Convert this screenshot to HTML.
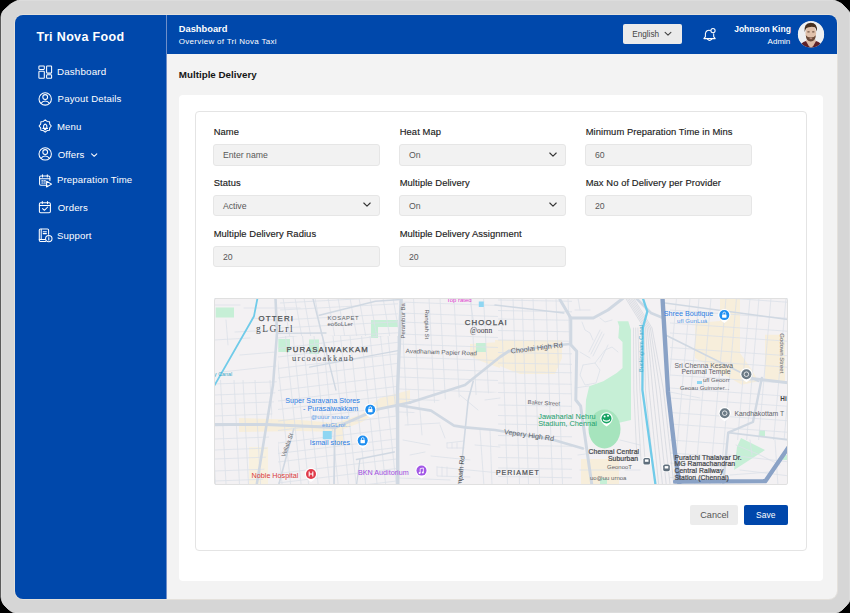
<!DOCTYPE html>
<html><head><meta charset="utf-8">
<style>
*{box-sizing:border-box;margin:0;padding:0}
html,body{width:850px;height:613px;overflow:hidden;background:#000;font-family:"Liberation Sans",sans-serif}
.abs{position:absolute}
.t{position:absolute;white-space:nowrap;line-height:1}
#frame{position:absolute;left:0;top:0;width:850px;height:613px}
#side{position:absolute;left:15px;top:15px;width:151px;height:584px;background:#0048ab;border-radius:8px 0 0 8px}
#head{position:absolute;left:166px;top:15px;width:671px;height:39px;background:#0048ab;border-radius:0 8px 0 0}
#content{position:absolute;left:166px;top:54px;width:671px;height:545px;background:#f3f3f3;border-radius:0 0 8px 0}
#sideline{position:absolute;left:166px;top:15px;width:1px;height:584px;background:#6f8fc9}
#card{position:absolute;left:179px;top:95px;width:644px;height:486px;background:#fff;border-radius:4px}
#box{position:absolute;left:194.5px;top:111px;width:612px;height:439.5px;border:1px solid #e4e4e4;border-radius:4px}
.lbl{position:absolute;white-space:nowrap;line-height:1;font-size:9.4px;color:#1b1b1b;font-weight:400;-webkit-text-stroke:0.15px #1b1b1b;letter-spacing:0.08px}
.inp{position:absolute;width:166.5px;height:21.5px;background:#f2f2f2;border:1px solid #e6e6e6;border-radius:3px}
.inp span{position:absolute;left:8.6px;top:6.3px;font-size:8.7px;line-height:1;color:#585858;white-space:nowrap}
.chev{position:absolute;right:8px;top:6.6px}
.nav{position:absolute;white-space:nowrap;line-height:1;font-size:9.6px;color:#fff;letter-spacing:0.15px}
.ico{position:absolute}
</style></head>
<body>
<div id="frame">
  <svg class="abs" style="left:0;top:0" width="850" height="613" viewBox="0 0 850 613"><path d="M19.2 0 H833 C836 0.6 839 2 842 4 L846 8 C848 10 849.5 12 850 13 V600 C849.5 602 848 604 846 606 L842 610 C840 611.5 838 612.6 836.5 613 H15 C13 612.6 10.5 611.2 8 609 L4 605 C2.4 603 1.3 600 1 597 V17 C1.3 14 2.4 11.5 4 10 L10 4.5 C13 2.5 16 0.8 19.2 0 Z" fill="#d6d6d6" stroke="#e6e6e6" stroke-width="0.8"/></svg>
  <div class="abs" style="left:14.3px;top:14.3px;width:823.4px;height:585.4px;border:0.7px solid #e4e1dc;border-radius:9px"></div>
  <div id="side"></div>
  <div id="head"></div>
  <div id="content"></div>
  <div id="sideline"></div>

  <!-- sidebar -->
  <div class="t" style="left:36.6px;top:31.2px;font-size:12.5px;font-weight:700;color:#fff;letter-spacing:0.35px">Tri Nova Food</div>

  <div class="nav" style="left:57px;top:67.4px;font-size:9.8px">Dashboard</div>
  <div class="nav" style="left:57.6px;top:94px">Payout Details</div>
  <div class="nav" style="left:56.9px;top:122.2px">Menu</div>
  <div class="nav" style="left:57.7px;top:149.6px">Offers</div>
  <div class="nav" style="left:56.9px;top:174.6px">Preparation Time</div>
  <div class="nav" style="left:57.7px;top:202.5px">Orders</div>
  <div class="nav" style="left:56.9px;top:230.8px">Support</div>

  <!-- header -->
  <div class="t" style="left:178.8px;top:24.6px;font-size:9.3px;font-weight:700;color:#fff">Dashboard</div>
  <div class="t" style="left:178.8px;top:38px;font-size:8px;color:#fff;letter-spacing:0.3px">Overview of Tri Nova Taxi</div>

  <div class="abs" style="left:623.2px;top:23.9px;width:59px;height:20.5px;background:#ebebeb;border-radius:2px"></div>
  <div class="t" style="left:632.2px;top:30.8px;font-size:8.2px;color:#444">English</div>

  <div class="t" style="left:734.2px;top:25.2px;font-size:8.5px;font-weight:700;color:#fff">Johnson King</div>
  <div class="t" style="left:767.6px;top:38px;font-size:8px;color:#fff">Admin</div>
  <div class="abs" style="left:797.7px;top:21.3px;width:26px;height:26px;border-radius:50%;background:#eeeff1;overflow:hidden"></div>


  <!-- icons overlay -->
  <svg class="abs" style="left:0;top:0" width="850" height="613" viewBox="0 0 850 613">
    <g stroke="#fff" stroke-width="1.05" fill="none" stroke-linecap="round" stroke-linejoin="round">
      <!-- dashboard -->
      <rect x="38.9" y="65.9" width="5.4" height="3.5" rx="0.6"/>
      <rect x="38.9" y="71.3" width="5.4" height="7.0" rx="0.6"/>
      <rect x="46.6" y="65.9" width="5.0" height="7.2" rx="0.6"/>
      <rect x="46.6" y="74.8" width="5.0" height="3.5" rx="0.6"/>
      <!-- payout -->
      <circle cx="45.2" cy="98.9" r="6.2"/>
      <circle cx="45.2" cy="97" r="2.4"/>
      <path d="M41.2 103.3 A4.4 4 0 0 1 49.2 103.3"/>
      <!-- menu gear badge -->
      <path d="M45.20 119.90 L47.08 121.47 L49.51 121.69 L49.73 124.12 L51.30 126.00 L49.73 127.88 L49.51 130.31 L47.08 130.53 L45.20 132.10 L43.32 130.53 L40.89 130.31 L40.67 127.88 L39.10 126.00 L40.67 124.12 L40.89 121.69 L43.32 121.47Z"/>
      <path d="M42.9 128.4 H47.5 M43.6 128.2 V125.8 Q45.2 122.4 46.8 125.8 V128.2 M44.5 129.6 H45.9"/>
      <!-- offers -->
      <circle cx="45.2" cy="153.9" r="6.2"/>
      <circle cx="45.2" cy="152" r="2.4"/>
      <path d="M41.2 158.3 A4.4 4 0 0 1 49.2 158.3"/>
      <!-- chevron offers -->
      <path d="M91.6 153.8 L94.2 156.3 L96.8 153.8"/>
      <!-- preparation time -->
      <path d="M47.2 185.2 H40.8 Q39.6 185.2 39.6 184 V177.2 Q39.6 176 40.8 176 H48.7 Q49.9 176 49.9 177.2 V180.5"/>
      <path d="M39.6 178.8 H49.9 M42.5 174.8 V177 M47.3 174.8 V177"/>
      <path d="M46.6 181.2 L51.6 184.1 L46.6 187 Z"/>
      <path d="M41.8 180.9 h1.2 M44.2 180.9 h1.2 M41.8 183 h1.2 M44.2 183 h1.2" stroke-width="1.1"/>
      <!-- orders -->
      <rect x="39.4" y="202.7" width="11" height="10" rx="1.2"/>
      <path d="M39.4 205.4 H50.4 M42.3 201.4 V203.6 M47.5 201.4 V203.6 M42.6 208.6 L44.4 210.3 L47.7 207"/>
      <!-- support -->
      <path d="M45.6 241.4 H40.4 Q39.3 241.4 39.3 240.3 V230 Q39.3 228.9 40.4 228.9 H47.5 Q48.6 228.9 48.6 230 V234.2"/>
      <path d="M41.2 229.2 V239.4 M39.3 239.4 H45.2 M43.2 231.8 H46.4 M43.2 233.6 H46.4"/>
      <circle cx="48.8" cy="238.6" r="3.2"/>
      <path d="M48.8 237.8 V240 M48.8 236.7 V236.8"/>
      <!-- bell -->
      <path d="M710.3 30.4 Q706.2 29.4 705.4 33.6 V36.6 L703.9 38.6 H715.2 L713.7 36.6 V33.8"/>
      <path d="M707.4 39.2 Q709.6 41.8 711.8 39.2"/>
      <circle cx="713" cy="30.6" r="2.1"/>
    </g>
    <!-- header chevron -->
    <path d="M665.1 32.4 L668 35.2 L670.9 32.4" stroke="#444" stroke-width="1.1" fill="none" stroke-linecap="round" stroke-linejoin="round"/>
    <!-- avatar -->
    <defs><clipPath id="av"><circle cx="811" cy="34.5" r="13.1"/></clipPath></defs>
    <g clip-path="url(#av)">
      <rect x="797" y="21" width="28" height="28" fill="#eef0f2"/>
      <path d="M799 49 Q800 42.5 806 41 L816 41 Q822 42.5 823 49 Z" fill="#5e2229"/>
      <path d="M806.5 39.5 L815.5 39.5 L815.8 41.5 Q813.5 46.5 811 48 Q808.5 46.5 806.2 41.5 Z" fill="#dcbba5"/>
      <ellipse cx="810.8" cy="33" rx="5.4" ry="7.2" fill="#e0c1ab"/>
      <path d="M805.8 35.2 Q806 41.2 810.8 41.6 Q815.6 41.2 815.8 35.2 Q814 37.6 810.8 37.5 Q807.6 37.6 805.8 35.2Z" fill="#6a4a38"/>
      <path d="M804.6 32 Q803.6 23.4 810.6 22.8 Q817.8 22.8 817 31.6 L816 29.2 Q815.4 26.6 810.8 26.9 Q806.4 26.8 805.6 29.6 Z" fill="#47301f"/>
      <rect x="807.4" y="31.4" width="2.2" height="1" fill="#5a4030"/>
      <rect x="812.2" y="31.4" width="2.2" height="1" fill="#5a4030"/>
      <rect x="809.6" y="38.2" width="2.6" height="0.9" fill="#c99a90"/>
    </g>
  </svg>

  <!-- page title -->
  <div class="t" style="left:178.8px;top:69.6px;font-size:9.8px;font-weight:700;color:#161616">Multiple Delivery</div>

  <div id="card"></div>
  <div id="box"></div>

  <!-- form -->
  <div class="lbl" style="left:213.7px;top:127.2px">Name</div>
  <div class="inp" style="left:213.3px;top:144px"><span>Enter name</span></div>
  <div class="lbl" style="left:399.7px;top:127.2px">Heat Map</div>
  <div class="inp" style="left:399.3px;top:144px"><span>On</span><svg class="chev" width="8" height="6" viewBox="0 0 8 6"><path d="M0.8 1 L4 4.2 L7.2 1" stroke="#333" stroke-width="1.1" fill="none" stroke-linecap="round" stroke-linejoin="round"/></svg></div>
  <div class="lbl" style="left:585.7px;top:127.2px">Minimum Preparation Time in Mins</div>
  <div class="inp" style="left:585.3px;top:144px"><span>60</span></div>

  <div class="lbl" style="left:213.7px;top:178.2px">Status</div>
  <div class="inp" style="left:213.3px;top:194.5px"><span>Active</span><svg class="chev" width="8" height="6" viewBox="0 0 8 6"><path d="M0.8 1 L4 4.2 L7.2 1" stroke="#333" stroke-width="1.1" fill="none" stroke-linecap="round" stroke-linejoin="round"/></svg></div>
  <div class="lbl" style="left:399.7px;top:178.2px">Multiple Delivery</div>
  <div class="inp" style="left:399.3px;top:194.5px"><span>On</span><svg class="chev" width="8" height="6" viewBox="0 0 8 6"><path d="M0.8 1 L4 4.2 L7.2 1" stroke="#333" stroke-width="1.1" fill="none" stroke-linecap="round" stroke-linejoin="round"/></svg></div>
  <div class="lbl" style="left:585.7px;top:178.2px">Max No of Delivery per Provider</div>
  <div class="inp" style="left:585.3px;top:194.5px"><span>20</span></div>

  <div class="lbl" style="left:213.7px;top:229.2px">Multiple Delivery Radius</div>
  <div class="inp" style="left:213.3px;top:245.5px"><span>20</span></div>
  <div class="lbl" style="left:399.7px;top:229.2px">Multiple Delivery Assignment</div>
  <div class="inp" style="left:399.3px;top:245.5px"><span>20</span></div>

  <!-- map -->
  <div id="map" class="abs" style="left:214px;top:298px;width:574px;height:187px;background:#f3f1f3;border-radius:2px;overflow:hidden"><!--MAPSTART--><svg id="mapsvg" width="574" height="187" viewBox="214 298 574 187" style="position:absolute;left:0;top:0;font-family:'Liberation Sans',sans-serif"><path d="M239.0 418.0 L300.0 420.0 L336.0 423.0 L362.0 414.0 L380.0 398.0 L410.0 390.0 L410.0 402.0 L380.0 410.0 L362.0 422.0 L336.0 432.0 L300.0 431.0 L239.0 432.0Z" fill="#f7eedb" /><rect x="336" y="425" width="7.0" height="20.0" fill="#f7eedb"/><rect x="249" y="447" width="19.0" height="39.0" fill="#f8f1e0"/><path d="M470.0 344.0 L500.0 342.0 L500.0 368.0 L478.0 360.0 L470.0 356.0Z" fill="#f7eedb" /><path d="M495.0 340.0 L562.0 340.0 L562.0 358.0 L555.0 374.0 L520.0 374.0 L500.0 366.0 L495.0 360.0Z" fill="#f7eedb" /><path d="M720.0 298.0 L740.0 298.0 L740.0 353.0 L751.7 369.7 L758.3 381.3 L741.7 384.7 L695.0 358.0 L695.0 323.0 L720.0 321.0Z" fill="#f7eedb" /><path d="M765.0 334.7 L785.0 334.7 L785.0 381.3 L765.0 381.3Z" fill="#f7eedb" /><path d="M581.0 459.0 L619.0 459.0 L619.0 486.0 L581.0 486.0Z" fill="#f7eedb" /><rect x="215.7" y="307.5" width="18.3" height="10.0" fill="#c6efd6"/><rect x="278.3" y="339" width="11.7" height="13.0" fill="#c6efd6"/><rect x="309" y="339.5" width="10.0" height="14.5" fill="#c6efd6"/><path d="M371.0 320.0 L398.0 320.0 L398.0 327.0 L378.0 327.0 L378.0 338.0 L371.0 338.0Z" fill="#c6efd6" /><rect x="476" y="343" width="10.0" height="9.0" fill="#c6efd6"/><path d="M617.5 321.3 L628.3 321.3 L631.0 330.0 L631.0 420.0 L618.0 423.0 L600.0 424.0 L585.0 423.0 L586.0 400.0 L589.2 386.3 L603.3 381.3 L616.7 373.0 L622.5 368.0 L622.5 342.0 L618.3 338.0 L619.2 326.3Z" fill="#c6efd6" /><ellipse cx="604.5" cy="429" rx="16" ry="19.5" fill="#a6e4bd"/><path d="M741.0 438.0 L765.0 450.0 L734.0 470.0 L737.0 447.0Z" fill="#c6efd6" /><rect x="759" y="430" width="6.0" height="6.0" fill="#c6efd6"/><rect x="783" y="455" width="4.0" height="5.0" fill="#c6efd6"/><rect x="600" y="478" width="7.0" height="8.0" fill="#c6efd6"/><defs><clipPath id="cA"><path d="M278.0 336.0 L398.0 336.0 L398.0 486.0 L278.0 486.0Z"/></clipPath><clipPath id="cA2"><path d="M280.0 298.0 L398.0 298.0 L398.0 336.0 L280.0 336.0Z"/></clipPath><clipPath id="cB"><path d="M399.0 298.0 L498.0 298.0 L498.0 392.0 L440.0 400.0 L399.0 420.0Z"/></clipPath><clipPath id="cC"><path d="M498.0 298.0 L572.0 298.0 L572.0 486.0 L498.0 486.0Z"/></clipPath><clipPath id="cE"><path d="M670.0 298.0 L790.0 298.0 L790.0 440.0 L728.0 440.0 L723.0 486.0 L670.0 486.0Z"/></clipPath><clipPath id="cF"><path d="M214.0 380.0 L277.0 380.0 L262.0 486.0 L214.0 486.0Z"/></clipPath></defs><path d="M238.0 336 L253.8 486 M245.5 336 L261.3 486 M255.0 336 L270.8 486 M266.5 336 L282.3 486 M275.0 336 L290.8 486 M285.5 336 L301.3 486 M293.0 336 L308.8 486 M302.5 336 L318.3 486 M314.0 336 L329.8 486 M322.5 336 L338.3 486 M333.0 336 L348.8 486 M340.5 336 L356.3 486 M350.0 336 L365.8 486 M361.5 336 L377.3 486 M370.0 336 L385.8 486 M380.5 336 L396.3 486 M388.0 336 L403.8 486 M397.5 336 L413.3 486 M409.0 336 L424.8 486 M417.5 336 L433.3 486 M428.0 336 L443.8 486 M435.5 336 L451.3 486" stroke="#dce1e8" stroke-width="0.8" fill="none" clip-path="url(#cA)"/><path d="M278 296.0 L398 281.3 M278 304.5 L398 289.8 M278 316.0 L398 301.3 M278 325.5 L398 310.8 M278 338.0 L398 323.3 M278 348.5 L398 333.8 M278 357.0 L398 342.3 M278 368.5 L398 353.8 M278 378.0 L398 363.3 M278 390.5 L398 375.8 M278 401.0 L398 386.3 M278 409.5 L398 394.8 M278 421.0 L398 406.3 M278 430.5 L398 415.8 M278 443.0 L398 428.3 M278 453.5 L398 438.8 M278 462.0 L398 447.3 M278 473.5 L398 458.8 M278 483.0 L398 468.3 M278 495.5 L398 480.8 M278 506.0 L398 491.3 M278 514.5 L398 499.8" stroke="#dce1e8" stroke-width="0.8" fill="none" clip-path="url(#cA)"/><path d="M240.0 298 L246.7 336 M249.0 298 L255.7 336 M260.0 298 L266.7 336 M273.0 298 L279.7 336 M283.0 298 L289.7 336 M295.0 298 L301.7 336 M304.0 298 L310.7 336 M315.0 298 L321.7 336 M328.0 298 L334.7 336 M338.0 298 L344.7 336 M350.0 298 L356.7 336 M359.0 298 L365.7 336 M370.0 298 L376.7 336 M383.0 298 L389.7 336 M393.0 298 L399.7 336 M405.0 298 L411.7 336 M414.0 298 L420.7 336 M425.0 298 L431.7 336" stroke="#dce1e8" stroke-width="0.8" fill="none" clip-path="url(#cA2)"/><path d="M280 258.0 L398 251.8 M280 265.0 L398 258.8 M280 275.0 L398 268.8 M280 283.0 L398 276.8 M280 294.0 L398 287.8 M280 303.0 L398 296.8 M280 310.0 L398 303.8 M280 320.0 L398 313.8 M280 328.0 L398 321.8 M280 339.0 L398 332.8 M280 348.0 L398 341.8 M280 355.0 L398 348.8 M280 365.0 L398 358.8 M280 373.0 L398 366.8" stroke="#dce1e8" stroke-width="0.8" fill="none" clip-path="url(#cA2)"/><path d="M359.0 298 L368.9 486 M370.0 298 L379.9 486 M384.0 298 L393.9 486 M401.0 298 L410.9 486 M413.5 298 L423.4 486 M429.0 298 L438.9 486 M440.0 298 L449.9 486 M454.0 298 L463.9 486 M471.0 298 L480.9 486 M483.5 298 L493.4 486 M499.0 298 L508.9 486 M510.0 298 L519.9 486 M524.0 298 L533.9 486" stroke="#dce1e8" stroke-width="0.8" fill="none" clip-path="url(#cB)"/><path d="M399 258.0 L498 261.5 M399 267.0 L498 270.5 M399 279.0 L498 282.5 M399 289.0 L498 292.5 M399 302.0 L498 305.5 M399 313.0 L498 316.5 M399 322.0 L498 325.5 M399 334.0 L498 337.5 M399 344.0 L498 347.5 M399 357.0 L498 360.5 M399 368.0 L498 371.5 M399 377.0 L498 380.5 M399 389.0 L498 392.5 M399 399.0 L498 402.5 M399 412.0 L498 415.5 M399 423.0 L498 426.5 M399 432.0 L498 435.5 M399 444.0 L498 447.5 M399 454.0 L498 457.5 M399 467.0 L498 470.5 M399 478.0 L498 481.5 M399 487.0 L498 490.5 M399 499.0 L498 502.5 M399 509.0 L498 512.5 M399 522.0 L498 525.5" stroke="#dce1e8" stroke-width="0.8" fill="none" clip-path="url(#cB)"/><path d="M458.0 298 L464.6 486 M467.0 298 L473.6 486 M478.0 298 L484.6 486 M491.0 298 L497.6 486 M501.0 298 L507.6 486 M513.0 298 L519.6 486 M522.0 298 L528.6 486 M533.0 298 L539.6 486 M546.0 298 L552.6 486 M556.0 298 L562.6 486 M568.0 298 L574.6 486 M577.0 298 L583.6 486 M588.0 298 L594.6 486 M601.0 298 L607.6 486 M611.0 298 L617.6 486" stroke="#dce1e8" stroke-width="0.8" fill="none" clip-path="url(#cC)"/><path d="M498 258.0 L572 259.3 M498 266.5 L572 267.8 M498 278.0 L572 279.3 M498 287.5 L572 288.8 M498 300.0 L572 301.3 M498 310.5 L572 311.8 M498 319.0 L572 320.3 M498 330.5 L572 331.8 M498 340.0 L572 341.3 M498 352.5 L572 353.8 M498 363.0 L572 364.3 M498 371.5 L572 372.8 M498 383.0 L572 384.3 M498 392.5 L572 393.8 M498 405.0 L572 406.3 M498 415.5 L572 416.8 M498 424.0 L572 425.3 M498 435.5 L572 436.8 M498 445.0 L572 446.3 M498 457.5 L572 458.8 M498 468.0 L572 469.3 M498 476.5 L572 477.8 M498 488.0 L572 489.3 M498 497.5 L572 498.8 M498 510.0 L572 511.3 M498 520.5 L572 521.8" stroke="#dce1e8" stroke-width="0.8" fill="none" clip-path="url(#cC)"/><path d="M630.0 298 L613.6 486 M639.0 298 L622.6 486 M651.0 298 L634.6 486 M666.0 298 L649.6 486 M676.5 298 L660.1 486 M690.0 298 L673.6 486 M699.0 298 L682.6 486 M711.0 298 L694.6 486 M726.0 298 L709.6 486 M736.5 298 L720.1 486 M750.0 298 L733.6 486 M759.0 298 L742.6 486 M771.0 298 L754.6 486 M786.0 298 L769.6 486 M796.5 298 L780.1 486 M810.0 298 L793.6 486 M819.0 298 L802.6 486" stroke="#dce1e8" stroke-width="0.8" fill="none" clip-path="url(#cE)"/><path d="M670 258.0 L790 266.4 M670 268.0 L790 276.4 M670 282.5 L790 290.9 M670 294.0 L790 302.4 M670 310.0 L790 318.4 M670 323.0 L790 331.4 M670 333.0 L790 341.4 M670 347.5 L790 355.9 M670 359.0 L790 367.4 M670 375.0 L790 383.4 M670 388.0 L790 396.4 M670 398.0 L790 406.4 M670 412.5 L790 420.9 M670 424.0 L790 432.4 M670 440.0 L790 448.4 M670 453.0 L790 461.4 M670 463.0 L790 471.4 M670 477.5 L790 485.9 M670 489.0 L790 497.4 M670 505.0 L790 513.4 M670 518.0 L790 526.4" stroke="#dce1e8" stroke-width="0.8" fill="none" clip-path="url(#cE)"/><path d="M174.0 380 L179.6 486 M183.0 380 L188.6 486 M195.0 380 L200.6 486 M210.0 380 L215.6 486 M220.5 380 L226.1 486 M234.0 380 L239.6 486 M243.0 380 L248.6 486 M255.0 380 L260.6 486 M270.0 380 L275.6 486 M280.5 380 L286.1 486 M294.0 380 L299.6 486 M303.0 380 L308.6 486 M315.0 380 L320.6 486" stroke="#dce1e8" stroke-width="0.8" fill="none" clip-path="url(#cF)"/><path d="M214 340.0 L277 337.8 M214 349.0 L277 346.8 M214 361.0 L277 358.8 M214 371.0 L277 368.8 M214 384.0 L277 381.8 M214 395.0 L277 392.8 M214 404.0 L277 401.8 M214 416.0 L277 413.8 M214 426.0 L277 423.8 M214 439.0 L277 436.8 M214 450.0 L277 447.8 M214 459.0 L277 456.8 M214 471.0 L277 468.8 M214 481.0 L277 478.8 M214 494.0 L277 491.8 M214 505.0 L277 502.8 M214 514.0 L277 511.8" stroke="#dce1e8" stroke-width="0.8" fill="none" clip-path="url(#cF)"/><path d="M244.0 308.0 L300.0 308.0" stroke="#dce1e8" stroke-width="0.8" fill="none" stroke-linejoin="round" stroke-linecap="round" /><path d="M214.0 340.0 L250.0 338.0" stroke="#dce1e8" stroke-width="0.8" fill="none" stroke-linejoin="round" stroke-linecap="round" /><path d="M226.0 320.0 L228.0 345.0" stroke="#dce1e8" stroke-width="0.8" fill="none" stroke-linejoin="round" stroke-linecap="round" /><path d="M240.0 355.0 L276.0 352.0" stroke="#dce1e8" stroke-width="0.8" fill="none" stroke-linejoin="round" stroke-linecap="round" /><path d="M214.0 305.0 L240.0 305.0" stroke="#dce1e8" stroke-width="0.8" fill="none" stroke-linejoin="round" stroke-linecap="round" /><path d="M222.0 372.0 L276.0 366.0" stroke="#dce1e8" stroke-width="0.8" fill="none" stroke-linejoin="round" stroke-linecap="round" /><path d="M235.0 332.0 L276.0 330.0" stroke="#dce1e8" stroke-width="0.8" fill="none" stroke-linejoin="round" stroke-linecap="round" /><path d="M252.0 318.0 L276.0 320.0" stroke="#dce1e8" stroke-width="0.8" fill="none" stroke-linejoin="round" stroke-linecap="round" /><path d="M582.0 322.0 L585.0 330.0 L590.0 333.0 L593.0 340.0" stroke="#dce1e8" stroke-width="0.8" fill="none" stroke-linejoin="round" stroke-linecap="round" /><path d="M600.0 330.0 L589.0 352.0" stroke="#dce1e8" stroke-width="0.8" fill="none" stroke-linejoin="round" stroke-linecap="round" /><path d="M602.0 332.0 L591.0 354.0" stroke="#dce1e8" stroke-width="0.8" fill="none" stroke-linejoin="round" stroke-linecap="round" /><path d="M604.0 334.0 L593.0 356.0" stroke="#dce1e8" stroke-width="0.8" fill="none" stroke-linejoin="round" stroke-linecap="round" /><path d="M580.0 352.0 L590.0 358.0" stroke="#dce1e8" stroke-width="0.8" fill="none" stroke-linejoin="round" stroke-linecap="round" /><path d="M583.0 365.0 L595.0 363.0 L600.0 370.0 L596.0 383.0 L585.0 385.0 L580.0 375.0 L583.0 365.0" stroke="#dce1e8" stroke-width="0.8" fill="none" stroke-linejoin="round" stroke-linecap="round" /><path d="M595.0 363.0 L605.0 350.0 L612.0 347.0 L618.0 352.0" stroke="#dce1e8" stroke-width="0.8" fill="none" stroke-linejoin="round" stroke-linecap="round" /><path d="M578.0 298.0 L580.0 310.0" stroke="#dce1e8" stroke-width="0.8" fill="none" stroke-linejoin="round" stroke-linecap="round" /><path d="M575.0 310.0 L590.0 310.0" stroke="#dce1e8" stroke-width="0.8" fill="none" stroke-linejoin="round" stroke-linecap="round" /><path d="M600.0 318.0 L605.0 322.0 L612.0 320.0" stroke="#dce1e8" stroke-width="0.8" fill="none" stroke-linejoin="round" stroke-linecap="round" /><path d="M608.0 345.0 L600.0 362.0" stroke="#dce1e8" stroke-width="0.8" fill="none" stroke-linejoin="round" stroke-linecap="round" /><path d="M575.0 388.0 L589.0 386.0" stroke="#dce1e8" stroke-width="0.8" fill="none" stroke-linejoin="round" stroke-linecap="round" /><path d="M578.0 455.0 L600.0 452.0 L620.0 458.0" stroke="#dce1e8" stroke-width="0.8" fill="none" stroke-linejoin="round" stroke-linecap="round" /><path d="M580.0 470.0 L620.0 470.0" stroke="#dce1e8" stroke-width="0.8" fill="none" stroke-linejoin="round" stroke-linecap="round" /><path d="M620.0 440.0 L640.0 445.0" stroke="#dce1e8" stroke-width="0.8" fill="none" stroke-linejoin="round" stroke-linecap="round" /><path d="M625.0 455.0 L640.0 455.0" stroke="#dce1e8" stroke-width="0.8" fill="none" stroke-linejoin="round" stroke-linecap="round" /><path d="M625.0 470.0 L640.0 470.0" stroke="#dce1e8" stroke-width="0.8" fill="none" stroke-linejoin="round" stroke-linecap="round" /><path d="M447.0 443.0 L464.0 441.0" stroke="#dce1e8" stroke-width="0.8" fill="none" stroke-linejoin="round" stroke-linecap="round" /><path d="M447.0 443.0 L447.0 448.0 L464.0 448.0" stroke="#dce1e8" stroke-width="0.8" fill="none" stroke-linejoin="round" stroke-linecap="round" /><path d="M452.0 443.0 L452.0 448.0" stroke="#dce1e8" stroke-width="0.8" fill="none" stroke-linejoin="round" stroke-linecap="round" /><path d="M457.0 443.0 L457.0 448.0" stroke="#dce1e8" stroke-width="0.8" fill="none" stroke-linejoin="round" stroke-linecap="round" /><path d="M431.0 456.0 L470.0 460.0" stroke="#dce1e8" stroke-width="0.8" fill="none" stroke-linejoin="round" stroke-linecap="round" /><path d="M437.0 467.0 L500.0 473.0" stroke="#dce1e8" stroke-width="0.8" fill="none" stroke-linejoin="round" stroke-linecap="round" /><path d="M437.0 467.0 L437.0 476.0 L470.0 477.0" stroke="#dce1e8" stroke-width="0.8" fill="none" stroke-linejoin="round" stroke-linecap="round" /><path d="M442.0 467.0 L442.0 476.0" stroke="#dce1e8" stroke-width="0.8" fill="none" stroke-linejoin="round" stroke-linecap="round" /><path d="M447.0 467.0 L447.0 476.0" stroke="#dce1e8" stroke-width="0.8" fill="none" stroke-linejoin="round" stroke-linecap="round" /><path d="M480.0 430.0 L484.0 486.0" stroke="#dce1e8" stroke-width="0.8" fill="none" stroke-linejoin="round" stroke-linecap="round" /><path d="M399.0 478.0 L450.0 480.0" stroke="#dce1e8" stroke-width="0.8" fill="none" stroke-linejoin="round" stroke-linecap="round" /><path d="M407.0 405.0 L408.0 425.0" stroke="#dce1e8" stroke-width="0.8" fill="none" stroke-linejoin="round" stroke-linecap="round" /><path d="M420.0 410.0 L422.0 435.0" stroke="#dce1e8" stroke-width="0.8" fill="none" stroke-linejoin="round" stroke-linecap="round" /><path d="M475.0 445.0 L500.0 447.0" stroke="#dce1e8" stroke-width="0.8" fill="none" stroke-linejoin="round" stroke-linecap="round" /><path d="M490.0 430.0 L492.0 486.0" stroke="#dce1e8" stroke-width="0.8" fill="none" stroke-linejoin="round" stroke-linecap="round" /><path d="M403.0 440.0 L430.0 445.0" stroke="#dce1e8" stroke-width="0.8" fill="none" stroke-linejoin="round" stroke-linecap="round" /><path d="M410.0 455.0 L425.0 452.0" stroke="#dce1e8" stroke-width="0.8" fill="none" stroke-linejoin="round" stroke-linecap="round" /><path d="M440.0 425.0 L445.0 438.0" stroke="#dce1e8" stroke-width="0.8" fill="none" stroke-linejoin="round" stroke-linecap="round" /><path d="M470.0 300.0 L475.0 330.0" stroke="#dce1e8" stroke-width="0.8" fill="none" stroke-linejoin="round" stroke-linecap="round" /><path d="M405.0 425.0 L440.0 423.0" stroke="#dce1e8" stroke-width="0.8" fill="none" stroke-linejoin="round" stroke-linecap="round" /><path d="M485.0 400.0 L500.0 398.0" stroke="#dce1e8" stroke-width="0.8" fill="none" stroke-linejoin="round" stroke-linecap="round" /><path d="M460.0 395.0 L478.0 410.0" stroke="#dce1e8" stroke-width="0.8" fill="none" stroke-linejoin="round" stroke-linecap="round" /><path d="M670.0 392.0 L700.0 398.0" stroke="#dce1e8" stroke-width="0.8" fill="none" stroke-linejoin="round" stroke-linecap="round" /><path d="M736.0 445.0 L760.0 455.0 L780.0 465.0" stroke="#dce1e8" stroke-width="0.8" fill="none" stroke-linejoin="round" stroke-linecap="round" /><path d="M730.0 475.0 L770.0 472.0" stroke="#dce1e8" stroke-width="0.8" fill="none" stroke-linejoin="round" stroke-linecap="round" /><path d="M728.0 455.0 L790.0 462.0" stroke="#dce1e8" stroke-width="0.8" fill="none" stroke-linejoin="round" stroke-linecap="round" /><path d="M775.0 440.0 L778.0 486.0" stroke="#dce1e8" stroke-width="0.8" fill="none" stroke-linejoin="round" stroke-linecap="round" /><path d="M750.0 440.0 L752.0 455.0" stroke="#dce1e8" stroke-width="0.8" fill="none" stroke-linejoin="round" stroke-linecap="round" /><path d="M740.0 470.0 L790.0 476.0" stroke="#dce1e8" stroke-width="0.8" fill="none" stroke-linejoin="round" stroke-linecap="round" /><path d="M625.5 298.0 L644.0 328.0 L645.5 390.0 L655.0 486.0" stroke="#cbd0d8" stroke-width="0.6" fill="none" stroke-linejoin="round" stroke-linecap="round" /><path d="M627.1 298.0 L645.6 328.0 L649.1 390.0 L658.8 486.0" stroke="#cbd0d8" stroke-width="0.6" fill="none" stroke-linejoin="round" stroke-linecap="round" /><path d="M628.7 298.0 L647.2 328.0 L652.7 390.0 L662.6 486.0" stroke="#cbd0d8" stroke-width="0.6" fill="none" stroke-linejoin="round" stroke-linecap="round" /><path d="M630.3 298.0 L648.8 328.0 L656.3 390.0 L666.4 486.0" stroke="#cbd0d8" stroke-width="0.6" fill="none" stroke-linejoin="round" stroke-linecap="round" /><path d="M631.9 298.0 L650.4 328.0 L659.9 390.0 L670.2 486.0" stroke="#cbd0d8" stroke-width="0.6" fill="none" stroke-linejoin="round" stroke-linecap="round" /><path d="M633.5 298.0 L652.0 328.0 L663.5 390.0 L674.0 486.0" stroke="#cbd0d8" stroke-width="0.6" fill="none" stroke-linejoin="round" stroke-linecap="round" /><path d="M633.5 328.0 L633.8 390.0 L637.0 460.0" stroke="#cfd3da" stroke-width="0.6" fill="none" stroke-linejoin="round" stroke-linecap="round" /><path d="M635.7 328.0 L636.8 390.0 L641.0 460.0" stroke="#cfd3da" stroke-width="0.6" fill="none" stroke-linejoin="round" stroke-linecap="round" /><path d="M637.9 328.0 L639.8 390.0 L645.0 460.0" stroke="#cfd3da" stroke-width="0.6" fill="none" stroke-linejoin="round" stroke-linecap="round" /><path d="M275.5 298.0 L277.0 333.0 L273.0 385.0 L256.5 486.0" stroke="#d0d8e2" stroke-width="2.6" fill="none" stroke-linejoin="round" stroke-linecap="round" /><path d="M214.0 424.5 L266.0 424.5 L335.7 427.5 L377.2 409.4 L410.0 402.5" stroke="#d0d8e2" stroke-width="2.8" fill="none" stroke-linejoin="round" stroke-linecap="round" /><path d="M410.0 402.5 L465.0 385.0 L500.0 357.0 L509.0 351.0" stroke="#d0d8e2" stroke-width="2.8" fill="none" stroke-linejoin="round" stroke-linecap="round" /><path d="M293.7 429.0 L278.4 486.0" stroke="#d0d8e2" stroke-width="1.6" fill="none" stroke-linejoin="round" stroke-linecap="round" /><path d="M334.8 427.0 L334.0 486.0" stroke="#d0d8e2" stroke-width="1.8" fill="none" stroke-linejoin="round" stroke-linecap="round" /><path d="M312.8 298.0 L335.9 390.0" stroke="#d0d8e2" stroke-width="1.4" fill="none" stroke-linejoin="round" stroke-linecap="round" /><path d="M319.4 315.3 L375.4 301.3 L401.0 299.6" stroke="#d0d8e2" stroke-width="1.5" fill="none" stroke-linejoin="round" stroke-linecap="round" /><path d="M277.0 333.4 L326.0 333.0" stroke="#d0d8e2" stroke-width="1.4" fill="none" stroke-linejoin="round" stroke-linecap="round" /><path d="M309.5 367.2 L398.0 350.7" stroke="#d0d8e2" stroke-width="1.3" fill="none" stroke-linejoin="round" stroke-linecap="round" /><path d="M356.4 459.5 L394.4 452.0" stroke="#d0d8e2" stroke-width="1.3" fill="none" stroke-linejoin="round" stroke-linecap="round" /><path d="M356.4 486.0 L359.9 459.5" stroke="#d0d8e2" stroke-width="1.3" fill="none" stroke-linejoin="round" stroke-linecap="round" /><path d="M401.2 298.0 L397.5 392.0 L397.8 486.0" stroke="#d0d8e2" stroke-width="3.4" fill="none" stroke-linejoin="round" stroke-linecap="round" /><path d="M397.0 405.0 L431.0 410.6 L454.0 425.6 L465.0 427.4 L495.0 430.0 L553.0 439.7 L583.0 448.5" stroke="#d0d8e2" stroke-width="2.6" fill="none" stroke-linejoin="round" stroke-linecap="round" /><path d="M473.2 381.2 L468.2 400.0 L459.4 486.0" stroke="#d0d8e2" stroke-width="1.6" fill="none" stroke-linejoin="round" stroke-linecap="round" /><path d="M509.0 351.0 L562.0 344.8 L570.0 344.0" stroke="#d0d8e2" stroke-width="2.6" fill="none" stroke-linejoin="round" stroke-linecap="round" /><path d="M560.0 299.7 L570.8 318.0 L570.8 344.7 L576.7 351.3 L575.8 400.0 L580.6 406.0 L592.0 486.0" stroke="#d0d8e2" stroke-width="3.0" fill="none" stroke-linejoin="round" stroke-linecap="round" /><path d="M570.8 318.0 L593.3 318.0 L608.0 310.0 L623.3 298.0" stroke="#d0d8e2" stroke-width="3.0" fill="none" stroke-linejoin="round" stroke-linecap="round" /><path d="M495.0 305.0 L563.8 313.0" stroke="#d0d8e2" stroke-width="1.6" fill="none" stroke-linejoin="round" stroke-linecap="round" /><path d="M636.0 298.0 L651.0 313.0 L662.0 317.5" stroke="#d0d8e2" stroke-width="2.6" fill="none" stroke-linejoin="round" stroke-linecap="round" /><path d="M665.0 303.0 L790.0 319.7" stroke="#d0d8e2" stroke-width="1.6" fill="none" stroke-linejoin="round" stroke-linecap="round" /><path d="M665.0 334.7 L758.3 381.3" stroke="#d0d8e2" stroke-width="1.6" fill="none" stroke-linejoin="round" stroke-linecap="round" /><path d="M748.3 378.0 L790.0 383.0" stroke="#d0d8e2" stroke-width="2.8" fill="none" stroke-linejoin="round" stroke-linecap="round" /><path d="M761.8 378.0 L753.0 422.0 L728.2 432.6 L723.0 486.0" stroke="#d0d8e2" stroke-width="2.4" fill="none" stroke-linejoin="round" stroke-linecap="round" /><path d="M728.2 432.6 L790.0 440.0" stroke="#d0d8e2" stroke-width="1.8" fill="none" stroke-linejoin="round" stroke-linecap="round" /><path d="M214.0 298.5 L790.0 298.5" stroke="#d0d8e2" stroke-width="1.2" fill="none" stroke-linejoin="round" stroke-linecap="round" /><path d="M257.5 298.0 L254.0 316.2 L213.0 388.0" stroke="#70cbe9" stroke-width="1.8" fill="none" stroke-linejoin="round" stroke-linecap="round" /><path d="M642.8 298.0 L647.3 311.5 L642.8 328.0 L642.4 390.0 L655.7 486.0" stroke="#70cbe9" stroke-width="2.3" fill="none" stroke-linejoin="round" stroke-linecap="round" /><path d="M662.5 298.0 L668.0 392.0 L675.3 455.6 L679.7 486.0" stroke="#8aa2c6" stroke-width="4.4" fill="none" stroke-linejoin="round" stroke-linecap="round" /><path d="M675.0 481.7 L765.3 481.2 L790.0 445.0" stroke="#8aa2c6" stroke-width="4.2" fill="none" stroke-linejoin="round" stroke-linecap="round" /><text x="258.5" y="320.6" font-size="7.8" fill="#4a4d50" font-weight="400" letter-spacing="1.15" stroke="#4a4d50" stroke-width="0.25">OTTERI</text><text x="256" y="331.6" font-size="9.4" fill="#4a4d50" font-weight="400" letter-spacing="1.6" font-family="Liberation Serif">gLGLrl</text><text x="327.6" y="319.7" font-size="5.8" fill="#5f6368" font-weight="400" letter-spacing="0.6" >KOSAPET</text><text x="327.5" y="326" font-size="6" fill="#5f6368" font-weight="400" letter-spacing="0" >eo6oLLer</text><text x="286.5" y="351.5" font-size="7.8" fill="#4a4d50" font-weight="400" letter-spacing="1.05" stroke="#4a4d50" stroke-width="0.25">PURASAIWAKKAM</text><text x="292" y="361" font-size="8.4" fill="#4a4d50" font-weight="400" letter-spacing="1.3" font-family="Liberation Serif">urcoaoakkaub</text><text x="214" y="376" font-size="5.4" fill="#3aa8c8" font-weight="400" letter-spacing="0" >y Canal</text><text x="405" y="338.6" font-size="6" fill="#5f6368" font-weight="400" letter-spacing="0" transform="rotate(-90 405 338.6)" >Perambur Ba</text><text x="425" y="309.5" font-size="6" fill="#5f6368" font-weight="400" letter-spacing="0" transform="rotate(90 425 309.5)" >Rangiah St</text><text x="446.7" y="301.5" font-size="6" fill="#e040d0" font-weight="400" letter-spacing="0" >Top rated</text><text x="464.7" y="324.9" font-size="7.8" fill="#4a4d50" font-weight="400" letter-spacing="1.15" stroke="#4a4d50" stroke-width="0.25">CHOOLAI</text><text x="470" y="333" font-size="7.6" fill="#3c4043" font-weight="400" letter-spacing="0" font-family="Liberation Serif">@oonn</text><text x="405.6" y="353" font-size="6.4" fill="#5f6368" font-weight="400" letter-spacing="0" transform="rotate(2 405.6 353)" >Avadhanam Papier Road</text><text x="511" y="353.6" font-size="7.2" fill="#5f6368" font-weight="400" letter-spacing="0" transform="rotate(-7 511 353.6)" >Choolai High Rd</text><text x="285.2" y="402.8" font-size="7.2" fill="#2b7de3" font-weight="400" letter-spacing="0" >Super Saravana Stores</text><text x="303" y="411.3" font-size="7.2" fill="#2b7de3" font-weight="400" letter-spacing="0" >- Purasaiwakkam</text><text x="311" y="419" font-size="6.2" fill="#5a9ae8" font-weight="400" letter-spacing="0" >@uuur sroaor</text><text x="322" y="427" font-size="6.2" fill="#5a9ae8" font-weight="400" letter-spacing="0" >eiuGLroi...</text><text x="309.8" y="444.7" font-size="7.2" fill="#2b7de3" font-weight="400" letter-spacing="0" >Ismail stores</text><text x="251.6" y="477.9" font-size="7.2" fill="#d93a3a" font-weight="400" letter-spacing="0" >Noble Hospital</text><text x="285" y="457" font-size="5.8" fill="#5f6368" font-weight="400" letter-spacing="0" transform="rotate(-70 285 457)" >Vellala St</text><text x="357.9" y="474.6" font-size="7.2" fill="#a04ee0" font-weight="400" letter-spacing="0" >BKN Auditorium</text><text x="461.6" y="485.5" font-size="6.8" fill="#4a4d50" font-weight="400" letter-spacing="0" transform="rotate(-84 461.6 485.5)" >mpath Rd</text><text x="527.6" y="404" font-size="5.8" fill="#5f6368" font-weight="400" letter-spacing="0" transform="rotate(3 527.6 404)" >Baker Street</text><text x="538.2" y="419" font-size="7.4" fill="#22a06b" font-weight="400" letter-spacing="0" >Jawaharlal Nehru</text><text x="538.2" y="426" font-size="7.4" fill="#22a06b" font-weight="400" letter-spacing="0" >Stadium, Chennai</text><text x="503.8" y="434" font-size="7.2" fill="#5f6368" font-weight="400" letter-spacing="0" transform="rotate(8 503.8 434)" >Vepery High Rd</text><text x="495.9" y="475.4" font-size="7" fill="#4a4d50" font-weight="400" letter-spacing="1.0" stroke="#4a4d50" stroke-width="0.2">PERIAMET</text><text x="588.5" y="453.8" font-size="6.8" fill="#45484c" font-weight="400" letter-spacing="0.1" stroke="#45484c" stroke-width="0.22">Chennai Central</text><text x="607.9" y="460.5" font-size="6.8" fill="#45484c" font-weight="400" letter-spacing="0.1" stroke="#45484c" stroke-width="0.22">Suburban</text><text x="607" y="468.5" font-size="6" fill="#5f6368" font-weight="400" letter-spacing="0" >GeonooT</text><text x="590" y="480" font-size="6" fill="#5f6368" font-weight="400" letter-spacing="0" >uo@uu urnoa</text><text x="642.5" y="372" font-size="5.6" fill="#3aa8c8" font-weight="400" letter-spacing="0" transform="rotate(-90 642.5 372)" >Buckingham Canal</text><text x="663.8" y="315.6" font-size="7.2" fill="#2b7de3" font-weight="400" letter-spacing="0" >Shree Boutique</text><text x="677" y="323" font-size="6.2" fill="#5a9ae8" font-weight="400" letter-spacing="0" >ufl GunLuá</text><text x="674.4" y="367.7" font-size="6.8" fill="#5f6368" font-weight="400" letter-spacing="0" >Sri Chenna Kesava</text><text x="681.5" y="374.2" font-size="6.8" fill="#5f6368" font-weight="400" letter-spacing="0" >Perumal Temple</text><text x="703" y="381.5" font-size="6" fill="#5f6368" font-weight="400" letter-spacing="0" >ufl Geoorr</text><text x="680" y="389.5" font-size="6" fill="#5f6368" font-weight="400" letter-spacing="0" >Geoau Guimorer...</text><text x="780.3" y="333.3" font-size="6" fill="#5f6368" font-weight="400" letter-spacing="0" transform="rotate(90 780.3 333.3)" >Godown Street</text><text x="734.4" y="416.4" font-size="6.8" fill="#5f6368" font-weight="400" letter-spacing="0" >Kandhakottam T</text><text x="780.3" y="400.9" font-size="6.4" fill="#3c4043" font-weight="700" letter-spacing="0" >Hi</text><text x="674.4" y="460" font-size="6.8" fill="#45484c" font-weight="400" letter-spacing="0.1" stroke="#45484c" stroke-width="0.22">Puratchi Thalaivar Dr.</text><text x="674.4" y="466.2" font-size="6.8" fill="#45484c" font-weight="400" letter-spacing="0.1" stroke="#45484c" stroke-width="0.22">MG Ramachandran</text><text x="674.4" y="473.2" font-size="6.8" fill="#45484c" font-weight="400" letter-spacing="0.1" stroke="#45484c" stroke-width="0.22">Central Railway</text><text x="674.4" y="480.3" font-size="6.8" fill="#45484c" font-weight="400" letter-spacing="0.1" stroke="#45484c" stroke-width="0.22">Station (Chennai)</text><path d="M364.1 409.7 A6.2 6.2 0 1 1 376.5 409.7 Q375.8 414.2 370.3 417.7 Q364.8 414.2 364.1 409.7Z" fill="#fff"/><circle cx="370.3" cy="409.7" r="5" fill="#1e8ef0"/><rect x="368.1" y="409.09999999999997" width="4.4" height="3.2" fill="#fff" rx="0.4"/><path d="M369.0 409.09999999999997 V408.0 A1.3 1.3 0 0 1 371.6 408.0 V409.09999999999997" stroke="#fff" stroke-width="0.8" fill="none"/><path d="M356.5 440.6 A6.2 6.2 0 1 1 368.9 440.6 Q368.2 445.1 362.7 448.6 Q357.2 445.1 356.5 440.6Z" fill="#fff"/><circle cx="362.7" cy="440.6" r="5" fill="#1e8ef0"/><rect x="360.5" y="440.0" width="4.4" height="3.2" fill="#fff" rx="0.4"/><path d="M361.4 440.0 V438.90000000000003 A1.3 1.3 0 0 1 364.0 438.90000000000003 V440.0" stroke="#fff" stroke-width="0.8" fill="none"/><path d="M718.0999999999999 315.1 A6.2 6.2 0 1 1 730.5 315.1 Q729.8 319.6 724.3 323.1 Q718.8 319.6 718.0999999999999 315.1Z" fill="#fff"/><circle cx="724.3" cy="315.1" r="5" fill="#1e8ef0"/><rect x="722.0999999999999" y="314.5" width="4.4" height="3.2" fill="#fff" rx="0.4"/><path d="M723.0 314.5 V313.40000000000003 A1.3 1.3 0 0 1 725.5999999999999 313.40000000000003 V314.5" stroke="#fff" stroke-width="0.8" fill="none"/><path d="M304.8 474 A6.2 6.2 0 1 1 317.2 474 Q316.5 478.5 311 482 Q305.5 478.5 304.8 474Z" fill="#fff"/><circle cx="311" cy="474" r="5" fill="#e03a4a"/><path d="M309.2 471.6 V476.4 M312.8 471.6 V476.4 M309.2 474 H312.8" stroke="#fff" stroke-width="1.1"/><path d="M415.3 470.6 A6.2 6.2 0 1 1 427.7 470.6 Q427.0 475.1 421.5 478.6 Q416.0 475.1 415.3 470.6Z" fill="#fff"/><circle cx="421.5" cy="470.6" r="5" fill="#a257e6"/><path d="M420.2 473 V468.6 L423.4 468 V472.4" stroke="#fff" stroke-width="0.8" fill="none"/><circle cx="419.6" cy="473" r="1" fill="#fff"/><circle cx="422.8" cy="472.4" r="1" fill="#fff"/><path d="M600.3 418.5 A6.2 6.2 0 1 1 612.7 418.5 Q612.0 423.0 606.5 426.5 Q601.0 423.0 600.3 418.5Z" fill="#fff"/><circle cx="606.5" cy="418.5" r="5" fill="#17a463"/><path d="M603 419 q3.5 3 7 0 v1.5 q-3.5 2.5 -7 0z" fill="#fff"/><circle cx="604.6" cy="416.4" r="1" fill="#fff"/><circle cx="608" cy="415.8" r="1" fill="#fff"/><path d="M740.1999999999999 374.2 A6.2 6.2 0 1 1 752.6 374.2 Q751.9 378.7 746.4 382.2 Q740.9 378.7 740.1999999999999 374.2Z" fill="#fff"/><circle cx="746.4" cy="374.2" r="5" fill="#6b7a85"/><circle cx="746.4" cy="374.2" r="2.3" stroke="#fff" stroke-width="0.8" fill="none"/><path d="M718.5 413.2 A6.2 6.2 0 1 1 730.9000000000001 413.2 Q730.2 417.7 724.7 421.2 Q719.2 417.7 718.5 413.2Z" fill="#fff"/><circle cx="724.7" cy="413.2" r="5" fill="#6b7a85"/><circle cx="724.7" cy="413.2" r="2.3" stroke="#fff" stroke-width="0.8" fill="none"/><rect x="642.7" y="457.2" width="8" height="8" rx="2" fill="#fff"/><rect x="643.4000000000001" y="457.9" width="6.6" height="6.6" rx="1.6" fill="#5f6e7c"/><rect x="644.9000000000001" y="459.4" width="3.6" height="2.4" fill="#fff"/><rect x="662.5" y="463.9" width="8" height="8" rx="2" fill="#fff"/><rect x="663.2" y="464.59999999999997" width="6.6" height="6.6" rx="1.6" fill="#5f6e7c"/><rect x="664.7" y="466.09999999999997" width="3.6" height="2.4" fill="#fff"/><rect x="322.8" y="431" width="9" height="8.2" fill="#8fd6f2"/><rect x="478.8" y="301.5" width="5" height="5.5" fill="#8fd6f2"/><rect x="697" y="381" width="5" height="3" fill="#8fd6f2"/></svg><!--MAPEND--><div class="abs" style="left:0;top:0;width:574px;height:187px;border:1px solid #e0e0e0;border-radius:2px"></div></div>

  <!-- buttons -->
  <div class="abs" style="left:690px;top:504.6px;width:48px;height:20.4px;background:#ececec;border-radius:2px"></div>
  <div class="t" style="left:700.3px;top:511.1px;font-size:9.1px;color:#555">Cancel</div>
  <div class="abs" style="left:744.2px;top:504.6px;width:43.8px;height:20.4px;background:#0047ab;border-radius:2px"></div>
  <div class="t" style="left:756px;top:510.5px;font-size:8.5px;color:#fff">Save</div>
</div>
</body></html>
